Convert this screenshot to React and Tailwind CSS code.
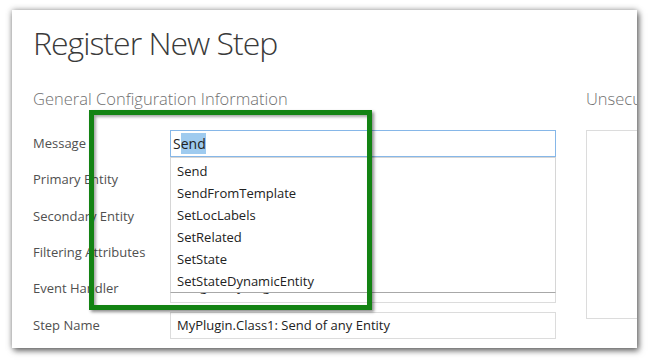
import React from 'react';

const rows = [
  { label: 'Message' },
  { label: 'Primary Entity' },
  { label: 'Secondary Entity' },
  { label: 'Filtering Attributes' },
  { label: 'Event Handler', value: '(Plugin) MyPlugin.Class1' },
  { label: 'Step Name', value: 'MyPlugin.Class1: Send of any Entity' },
  { label: 'Description' },
];

const options = ['Send', 'SendFromTemplate', 'SetLocLabels', 'SetRelated', 'SetState', 'SetStateDynamicEntity'];

const App = () => {
  return (
    <div className="relative w-[650px] h-[360px] bg-white overflow-hidden font-['Open_Sans','Noto_Sans',sans-serif]">
      {/* Dialog window */}
      <div className="absolute left-[12px] top-[10px] w-[625px] h-[338px] bg-white overflow-hidden shadow-[2px_3px_6px_rgba(0,0,0,0.5),0_0_6px_rgba(0,0,0,0.35)]">
        <div className="pl-[21px] pt-[10px]">
          <h1 className="text-[32px] font-light leading-[46px] text-[#3a3a3a] tracking-[-1px]">Register New Step</h1>

          <div className="flex mt-[21px] gap-[30px]">
            {/* Left column */}
            <div className="w-[523px] shrink-0">
              <h2 className="text-[16.5px] font-light leading-[24px] text-[#707070]">General Configuration Information</h2>

              <div className="relative mt-[19px] flex flex-col gap-[9.4px]">
                {rows.map((row, i) => (
                  <div key={row.label} className="flex items-center h-[27px]">
                    <div className="w-[137px] text-[13px] text-[#505050]">{row.label}</div>
                    {i === 0 ? (
                      <div className="w-[386px] h-[27px] border border-[#86b7e8] flex items-center px-[2px] text-[14px] text-[#222]">
                        <span>S</span>
                        <span className="bg-[#9fcbef]">end</span>
                      </div>
                    ) : (
                      <div className={`w-[386px] h-[27px] border border-[#dcdcdc] flex items-center px-[6px] text-[13px] text-[#222] ${i === 4 ? 'pb-[5px]' : ''}`}>
                        {row.value}
                      </div>
                    )}
                  </div>
                ))}

                {/* Autocomplete dropdown */}
                <div className="absolute left-[137px] top-[27px] w-[386px] h-[136px] bg-white border border-[#d6d6d6] border-b-[#a8a8a8] pt-[2px]">
                  {options.map((opt) => (
                    <div key={opt} className="h-[22px] leading-[22px] pl-[6px] text-[13px] text-[#222]">{opt}</div>
                  ))}
                </div>
              </div>
            </div>

            {/* Right column */}
            <div className="shrink-0 w-[200px]">
              <h2 className="text-[16.5px] font-light leading-[24px] text-[#707070] whitespace-nowrap">Unsecure Configuration</h2>
              <div className="mt-[19px] w-[200px] h-[189px] border border-[#dcdcdc]" />
            </div>
          </div>
        </div>
      </div>

      {/* Green highlight annotation */}
      <div className="absolute left-[89px] top-[110px] w-[283px] h-[200px] border-[5px] border-[#138313] shadow-[2px_2px_3px_rgba(0,0,0,0.45),inset_2px_2px_3px_rgba(0,0,0,0.35)]" />
    </div>
  );
};

export default App;
